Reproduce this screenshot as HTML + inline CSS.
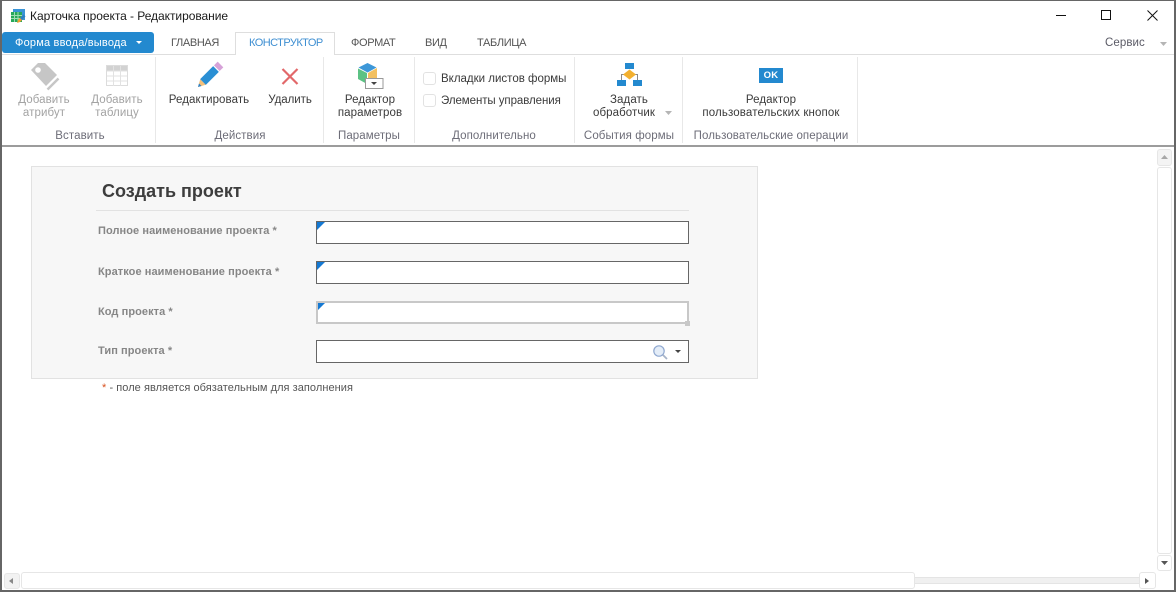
<!DOCTYPE html>
<html lang="ru"><head><meta charset="utf-8"><title>Карточка проекта</title>
<style>
html,body{margin:0;padding:0;width:1176px;height:592px;overflow:hidden;background:#fff}
body{position:relative;font-family:"Liberation Sans",sans-serif;color:#444}
.t{position:absolute;white-space:nowrap;font-size:11.5px;line-height:14px;letter-spacing:.08px;color:#444}
.tab{font-size:11px;letter-spacing:-.35px;color:#555}
.c{transform:translateX(-50%);text-align:center}
.g{color:#a3a3a3}
.gl{color:#6d6d78}
.b{position:absolute;box-sizing:border-box}
.sep{position:absolute;top:57px;height:86px;width:1px;background:#e8e8e8}
.lbl{position:absolute;white-space:nowrap;left:98px;font:bold 11px/14px "Liberation Sans",sans-serif;letter-spacing:.07px;color:#868686}
.inp{position:absolute;box-sizing:border-box;left:316px;width:373px;height:23px;background:#fff;border:1px solid #666}
.tri{position:absolute;left:0;top:0;width:0;height:0;border-top:8px solid #1478d2;border-right:8px solid transparent}
.sb{position:absolute;box-sizing:border-box;background:#fff;border:1px solid #e6e6e6;border-radius:3px}
svg{position:absolute;overflow:visible}
</style></head><body>
<!-- window frame -->
<div class="b" style="left:0;top:0;width:1176px;height:592px;border:1px solid #666;border-left-width:2px;border-right-width:2px;border-bottom-width:2px;z-index:5;pointer-events:none"></div>

<!-- title bar -->
<svg style="left:10px;top:8px" width="16" height="16" viewBox="0 0 16 16">
<rect x="3" y="1" width="12" height="11" fill="#3a94d6"/>
<rect x="1" y="4" width="11" height="10" fill="#27a85a"/>
<path d="M1 7.500h11M1 10.500h11M4.500 4v10M8 4v10" stroke="#9fdcb3" stroke-width="1"/>
<path d="M7 15l1-3 5-5 2 2-5 5z" fill="#f0a030"/>
<path d="M10 10l3.500-3.500 2 2-3.500 3.500z" fill="#2a80c8"/>
</svg>
<div class="t" style="left:30px;top:9px;font-size:12px;color:#1a1a1a;letter-spacing:-.05px">Карточка проекта - Редактирование</div>
<svg style="left:1056px;top:9px" width="12" height="12"><path d="M0 6.500h10" stroke="#111" stroke-width="1"/></svg>
<svg style="left:1101px;top:10px" width="12" height="12"><rect x=".5" y=".5" width="9" height="9" fill="none" stroke="#111"/></svg>
<svg style="left:1147px;top:10px" width="12" height="12"><path d="M.5 .5l10 10M10.500 .5l-10 10" stroke="#111" stroke-width="1"/></svg>

<!-- tabs row -->
<div class="b" style="left:2px;top:54px;width:1172px;height:1px;background:#dedede"></div>
<div class="b" style="left:2px;top:32px;width:152px;height:21px;background:#2389cf;border-radius:3px"></div>
<div class="t" style="left:15px;top:36px;font-size:11px;color:#fff;letter-spacing:.2px">Форма ввода/вывода</div>
<svg style="left:136px;top:41px" width="7" height="4"><path d="M0 0h6l-3 3z" fill="#fff"/></svg>
<div class="t tab" style="left:171px;top:36px">ГЛАВНАЯ</div>
<div class="b" style="left:235px;top:32px;width:100px;height:23px;background:#fff;border:1px solid #dedede;border-bottom:0"></div>
<div class="t tab" style="left:249px;top:36px;color:#3f8fd2;letter-spacing:-.55px">КОНСТРУКТОР</div>
<div class="t tab" style="left:351px;top:36px">ФОРМАТ</div>
<div class="t tab" style="left:425px;top:36px">ВИД</div>
<div class="t tab" style="left:477px;top:36px">ТАБЛИЦА</div>
<div class="t" style="left:1105px;top:36px;color:#5b5b66">Сервис</div>
<svg style="left:1160px;top:42px" width="8" height="5"><path d="M0 0h7l-3.500 4z" fill="#b5b5b5"/></svg>

<!-- separators -->
<div class="sep" style="left:155px"></div>
<div class="sep" style="left:323px"></div>
<div class="sep" style="left:414px"></div>
<div class="sep" style="left:574px"></div>
<div class="sep" style="left:682px"></div>
<div class="sep" style="left:857px"></div>

<!-- ribbon: insert -->
<svg style="left:30px;top:62px" width="30" height="30" viewBox="0 0 30 30">
<path d="M1 8L8 1h7l12 12-11 11z" fill="#c6c6c6"/>
<circle cx="8" cy="8" r="2.800" fill="#fff"/>
<path d="M17.500 27.500L28.500 16.500" stroke="#c6c6c6" stroke-width="2.500"/>
</svg>
<div class="t c g" style="left:44px;top:93px">Добавить</div>
<div class="t c g" style="left:44px;top:106px">атрибут</div>
<svg style="left:106px;top:65px" width="23" height="22" viewBox="0 0 23 22">
<rect x=".5" y=".5" width="21" height="20" fill="#fff" stroke="#dcdcdc"/>
<rect x="1" y="1" width="20" height="5" fill="#d2d2d2"/>
<path d="M1 6h20M1 11h20M1 16h20M7.500 1v20M14.500 1v20" stroke="#e2e2e2" stroke-width="1"/>
</svg>
<div class="t c g" style="left:117px;top:93px">Добавить</div>
<div class="t c g" style="left:117px;top:106px">таблицу</div>
<div class="t c gl" style="left:80px;top:129px">Вставить</div>

<!-- ribbon: actions -->
<svg style="left:197px;top:62px" width="27" height="27" viewBox="0 0 27 27">
<path d="M1 25l2.200-7.800 5.600 5.600z" fill="#f4c07a"/>
<path d="M1 25l1-3.500 2.500 2.500z" fill="#2a80c8"/>
<path d="M6 20L19 7" stroke="#2a8fd4" stroke-width="8"/>
<path d="M19.800 6.200L23.500 2.500" stroke="#d6a2d8" stroke-width="8"/>
</svg>
<div class="t c" style="left:209px;top:93px;color:#3a3a3a">Редактировать</div>
<svg style="left:281px;top:68px" width="18" height="17" viewBox="0 0 18 17"><path d="M1.500 1l15 15M16.500 1l-15 15" stroke="#e2686a" stroke-width="2.200"/></svg>
<div class="t c" style="left:290px;top:93px;color:#3a3a3a;letter-spacing:-.05px">Удалить</div>
<div class="t c gl" style="left:240px;top:129px">Действия</div>

<!-- ribbon: params -->
<svg style="left:357px;top:63px" width="28" height="27" viewBox="0 0 28 27">
<path d="M10.500 0l9 4.500-9 5-9-5z" fill="#3d97d8"/>
<path d="M1 5.500l9 4.500V21l-9-5z" fill="#5cc284"/>
<path d="M11 10l9-5v10h-9z" fill="#f3c060"/>
<rect x="8.500" y="15.500" width="17.500" height="10" fill="#fff" stroke="#999"/>
<path d="M14 19h6l-3 3z" fill="#444"/>
</svg>
<div class="t c" style="left:370px;top:93px;color:#3a3a3a">Редактор</div>
<div class="t c" style="left:370px;top:106px;color:#3a3a3a">параметров</div>
<div class="t c gl" style="left:369px;top:129px">Параметры</div>

<!-- ribbon: extra -->
<div class="b" style="left:423px;top:72px;width:13px;height:13px;border:1px solid #e2e2e2;border-radius:3px"></div>
<div class="t" style="left:441px;top:72px;color:#3a3a3a;letter-spacing:0">Вкладки листов формы</div>
<div class="b" style="left:423px;top:94px;width:13px;height:13px;border:1px solid #e2e2e2;border-radius:3px"></div>
<div class="t" style="left:441px;top:94px;color:#3a3a3a;letter-spacing:-.07px">Элементы управления</div>
<div class="t c gl" style="left:494px;top:129px">Дополнительно</div>

<!-- ribbon: events -->
<svg style="left:616px;top:62px" width="26" height="25" viewBox="0 0 26 25">
<path d="M5.500 18v-5.500H21.500V18" fill="none" stroke="#8a8a8a" stroke-width="1"/>
<rect x="9" y="1" width="9" height="6" fill="#2389cf"/>
<path d="M13.500 7.500l6.500 5-6.500 5-6.500-5z" fill="#f3b02f"/>
<rect x="1" y="18" width="9" height="6" fill="#2389cf"/>
<rect x="17" y="18" width="9" height="6" fill="#2389cf"/>
</svg>
<div class="t c" style="left:629px;top:93px;color:#3a3a3a">Задать</div>
<div class="t c" style="left:624px;top:106px;color:#3a3a3a">обработчик</div>
<svg style="left:665px;top:111px" width="8" height="5"><path d="M0 0h7l-3.500 4z" fill="#b5b5b5"/></svg>
<div class="t c gl" style="left:629px;top:129px">События формы</div>

<!-- ribbon: custom -->
<div class="b" style="left:759px;top:68px;width:24px;height:15px;background:#2389cf"></div>
<div class="t c" style="left:771px;top:69px;color:#fff;font-size:9.500px;font-weight:bold;letter-spacing:.2px">OK</div>
<div class="t c" style="left:771px;top:93px;color:#3a3a3a">Редактор</div>
<div class="t c" style="left:771px;top:106px;color:#3a3a3a;letter-spacing:.13px">пользовательских кнопок</div>
<div class="t c gl" style="left:771px;top:129px">Пользовательские операции</div>

<!-- ribbon bottom -->
<div class="b" style="left:2px;top:145px;width:1172px;height:2px;background:#9c9c9c"></div>

<!-- form -->
<div class="b" style="left:31px;top:166px;width:727px;height:213px;background:#f7f7f7;border:1px solid #e2e2e2"></div>
<div style="position:absolute;left:102px;top:181px;white-space:nowrap;font:bold 18px/20px 'Liberation Sans',sans-serif;letter-spacing:0;color:#3d3d3d">Создать проект</div>
<div class="b" style="left:96px;top:210px;width:593px;height:1px;background:#e2e2e2"></div>

<div class="lbl" style="left:98px;top:224px">Полное наименование проекта *</div>
<div class="inp" style="top:221px"><div class="tri"></div></div>
<div class="lbl" style="left:98px;top:265px">Краткое наименование проекта *</div>
<div class="inp" style="top:261px"><div class="tri"></div></div>
<div class="lbl" style="left:98px;top:305px">Код проекта *</div>
<div class="inp" style="top:301px;border:2px solid #c8c8c8"><div class="tri" style="border-top-width:7px;border-right-width:7px"></div></div>
<div class="b" style="left:685px;top:321px;width:5px;height:5px;background:#c8c8c8"></div>
<div class="lbl" style="left:98px;top:344px">Тип проекта *</div>
<div class="inp" style="top:340px"></div>
<svg style="left:653px;top:345px" width="16" height="16" viewBox="0 0 16 16">
<circle cx="6" cy="6" r="5.200" fill="#e4edf8" stroke="#8fa8d0" stroke-width="1.200"/>
<path d="M10 10l4 4" stroke="#a8b4c8" stroke-width="1.800"/>
</svg>
<svg style="left:675px;top:350px" width="7" height="4"><path d="M0 0h6l-3 3z" fill="#444"/></svg>
<div style="position:absolute;left:102px;top:381px;white-space:nowrap;font:11px/14px 'Liberation Sans',sans-serif;letter-spacing:.05px;color:#555"><span style="color:#d8501e">*</span> - поле является обязательным для заполнения</div>

<!-- vertical scrollbar -->
<div class="sb" style="left:1157px;top:149px;width:15px;height:17px;background:#f4f4f4"></div>
<svg style="left:1161px;top:155px" width="8" height="5"><path d="M3.500 0l3.500 4h-7z" fill="#a8a8a8"/></svg>
<div class="sb" style="left:1157px;top:167px;width:15px;height:387px"></div>
<div class="sb" style="left:1157px;top:555px;width:15px;height:16px"></div>
<svg style="left:1161px;top:561px" width="8" height="5"><path d="M0 0h7l-3.500 4z" fill="#555"/></svg>

<!-- horizontal scrollbar -->
<div class="sb" style="left:4px;top:573px;width:16px;height:16px;background:#f2f2f2"></div>
<svg style="left:9px;top:578px" width="5" height="7"><path d="M4 0v6l-4-3z" fill="#888"/></svg>
<div class="sb" style="left:21px;top:572px;width:894px;height:17px"></div>
<div class="b" style="left:915px;top:577px;width:224px;height:7px;background:#f0f0f0;border-top:1px solid #e4e4e4;border-bottom:1px solid #e4e4e4"></div>
<div class="sb" style="left:1139px;top:572px;width:17px;height:17px"></div>
<svg style="left:1145px;top:578px" width="5" height="7"><path d="M0 0v6l4-3z" fill="#555"/></svg>
</body></html>
